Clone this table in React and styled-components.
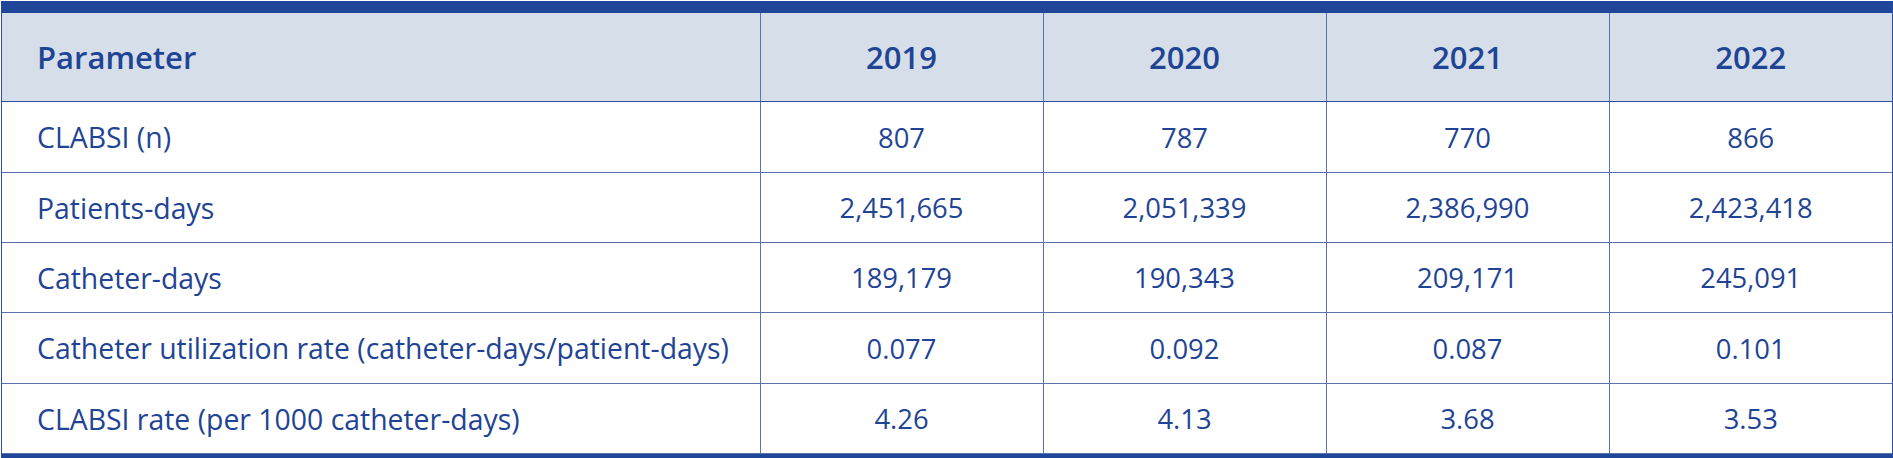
import styled, { createGlobalStyle } from "styled-components";

const GlobalStyle = createGlobalStyle`
    body {
        margin: 0;
        background: #ffffff;
        font-family: "Open Sans", "Noto Sans", sans-serif;
    }
`
const Frame = styled.div`
    width: 1892px;
    margin: 1px 0 0 1px;
    box-sizing: border-box;
    border-top: 12px solid #1f4699;
    border-bottom: 12px solid #1f4699;
    border-left: 1px solid #2d4f9f;
    border-right: 1px solid #2d4f9f;
`
const Table = styled.table`
    width: 100%;
    border-collapse: collapse;
    table-layout: fixed;
    color: #1f4494;
`
const HeadCell = styled.th`
    height: 88px;
    padding: 0;
    padding-left: ${(p) => (p.$first ? "35px" : "0")};
    text-align: ${(p) => (p.$first ? "left" : "center")};
    background: #d6deea;
    font-size: 31px;
    font-weight: 600;
    border-bottom: 1px solid #2d4f9f;
    border-right: 1px solid #5a72b0;
    &:last-child {
        border-right: none;
    }
`
const Cell = styled.td`
    height: ${(p) => p.$h}px;
    padding: 0;
    padding-left: ${(p) => (p.$first ? "35px" : "0")};
    text-align: ${(p) => (p.$first ? "left" : "center")};
    font-size: ${(p) => (p.$first ? "28.4px" : "27.4px")};
    font-weight: 400;
    border-bottom: 1px solid #5a72b0;
    border-right: 1px solid #5a72b0;
    white-space: nowrap;
    &:last-child {
        border-right: none;
    }
`

const years = ["2019", "2020", "2021", "2022"]

const rows = [
    { label: "CLABSI (n)", values: ["807", "787", "770", "866"], h: 70 },
    { label: "Patients-days", values: ["2,451,665", "2,051,339", "2,386,990", "2,423,418"], h: 69 },
    { label: "Catheter-days", values: ["189,179", "190,343", "209,171", "245,091"], h: 69 },
    { label: "Catheter utilization rate (catheter-days/patient-days)", values: ["0.077", "0.092", "0.087", "0.101"], h: 70 },
    { label: "CLABSI rate (per 1000 catheter-days)", values: ["4.26", "4.13", "3.68", "3.53"], h: 69 },
]

const App = () => {
    return (
        <>
            <GlobalStyle />
            <Frame>
                <Table>
                    <colgroup>
                        <col style={{ width: 758 }} />
                        <col />
                        <col />
                        <col />
                        <col />
                    </colgroup>
                    <thead>
                        <tr>
                            <HeadCell $first>Parameter</HeadCell>
                            {years.map((y) => (
                                <HeadCell key={y}>{y}</HeadCell>
                            ))}
                        </tr>
                    </thead>
                    <tbody>
                        {rows.map((r) => (
                            <tr key={r.label}>
                                <Cell $first $h={r.h}>{r.label}</Cell>
                                {r.values.map((v, i) => (
                                    <Cell key={i} $h={r.h}>{v}</Cell>
                                ))}
                            </tr>
                        ))}
                    </tbody>
                </Table>
            </Frame>
        </>
    )
}

export default App
